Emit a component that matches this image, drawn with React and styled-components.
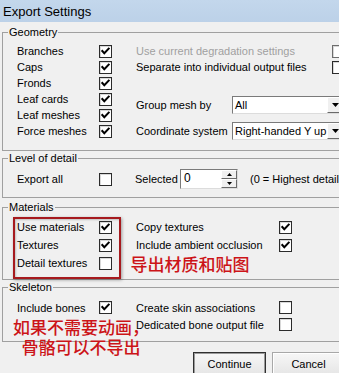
import React from 'react';
import styled, { createGlobalStyle } from 'styled-components';

const Global = createGlobalStyle`
  html, body { margin: 0; padding: 0; background: #f0f0f0; overflow: hidden; }
  body { font-family: "Liberation Sans", Arial, sans-serif; font-size: 11px; color: #000; }
  * { box-sizing: border-box; }
`;

const Window = styled.div`
  position: relative;
  width: 358px;
  height: 373px;
  overflow: hidden;
  background: #f0f0f0;
  display: flex;
  flex-direction: column;
`;

const TitleBar = styled.div`
  height: 22px;
  flex-shrink: 0;
  display: flex;
  align-items: center;
  padding-left: 3px;
  background: linear-gradient(#c3d7ec, #bcd1e8);
  font-size: 13px;
  color: #000;
`;

const Body = styled.div`
  display: flex;
  flex-direction: column;
  padding: 0 3px 0 2px;
`;

const Group = styled.fieldset`
  margin: ${p => p.$mt}px 0 0 0;
  padding: 0;
  min-width: 0;
  border: 1px solid #a0a0a0;
`;

const Legend = styled.legend`
  margin-left: 5px;
  padding: 0 1px;
  line-height: 12px;
  font-size: 11px;
`;

const Content = styled.div`
  display: flex;
  padding: ${p => p.$pt}px 0 ${p => p.$pb}px 14px;
`;

const Column = styled.div`
  display: flex;
  flex-direction: column;
  margin-left: ${p => p.$ml || 0}px;
`;

const Row = styled.div`
  display: flex;
  align-items: center;
  height: ${p => p.$h}px;
  margin-top: ${p => p.$mt || 0}px;
`;

const Label = styled.span`
  width: ${p => p.$w}px;
  flex-shrink: 0;
  white-space: nowrap;
  color: ${p => (p.$disabled ? '#a0a0a0' : '#000')};
  margin-left: ${p => p.$ml || 0}px;
`;

const Box = styled.span`
  width: 13px;
  height: 13px;
  flex-shrink: 0;
  display: inline-flex;
  align-items: center;
  justify-content: center;
  background: #fff;
  border: 1px solid ${p => (p.$disabled ? '#6d6d6d' : '#2b2b2b')};
  box-shadow: inset 1px 1px 0 #d8d8d8;
`;

const Check = ({ checked, disabled }) => (
  <Box $disabled={disabled}>
    {checked && (
      <svg width="11" height="11" viewBox="0 0 11 11">
        <polyline points="2.3,5 4.3,7.2 8.7,2.6" fill="none" stroke="#000" strokeWidth="2" strokeLinecap="square" />
      </svg>
    )}
  </Box>
);

const Select = styled.div`
  width: 112px;
  height: 18px;
  flex-shrink: 0;
  display: flex;
  align-items: stretch;
  background: #fff;
  border: 1px solid #7a7a7a;
  border-right-color: #dcdcdc;
  border-bottom-color: #dcdcdc;
`;

const SelectText = styled.span`
  flex: 1;
  min-width: 0;
  display: flex;
  align-items: center;
  padding-left: 2px;
  white-space: nowrap;
  overflow: hidden;
  font-size: 11px;
`;

const ArrowButton = styled.span`
  width: 16px;
  flex-shrink: 0;
  display: flex;
  align-items: center;
  justify-content: center;
  background: #f0f0f0;
  border: 1px solid;
  border-color: #fff #6a6a6a #6a6a6a #fff;
`;

const Dropdown = ({ value }) => (
  <Select>
    <SelectText>{value}</SelectText>
    <ArrowButton>
      <svg width="7" height="4" viewBox="0 0 7 4">
        <polygon points="0,0 7,0 3.5,4" fill="#000" />
      </svg>
    </ArrowButton>
  </Select>
);

const SpinBox = styled.div`
  width: 58px;
  height: 20px;
  flex-shrink: 0;
  display: flex;
  background: #fff;
  border: 1px solid #7a7a7a;
  border-right-color: #dcdcdc;
  border-bottom-color: #dcdcdc;
`;

const SpinText = styled.span`
  flex: 1;
  padding: 1px 0 0 3px;
  font-size: 12px;
  line-height: 14px;
`;

const SpinButtons = styled.div`
  width: 16px;
  display: flex;
  flex-direction: column;
`;

const SpinButton = styled.span`
  flex: 1;
  display: flex;
  align-items: center;
  justify-content: center;
  background: #f0f0f0;
  border: 1px solid;
  border-color: #fff #6a6a6a #6a6a6a #fff;
`;

const Tri = ({ up }) => (
  <svg width="5" height="3" viewBox="0 0 5 3">
    <polygon points={up ? '2.5,0 5,3 0,3' : '0,0 5,0 2.5,3'} fill="#000" />
  </svg>
);

const Buttons = styled.div`
  display: flex;
  justify-content: flex-end;
  gap: 6px;
  margin-top: 10px;
  padding-right: 10px;
`;

const Button = styled.div`
  width: 73px;
  height: 23px;
  display: flex;
  align-items: center;
  justify-content: center;
  background: linear-gradient(#f7f7f7, #e6e6e6);
  border: 1px solid ${p => (p.$default ? '#303030' : '#a8a8a8')};
  box-shadow: ${p => (p.$default ? 'inset 0 0 0 1px #9a9a9a' : 'inset 1px 1px 0 #fff')};
  font-size: 11px;
`;

const Highlight = styled.div`
  position: absolute;
  left: 13px;
  top: 217px;
  width: 108px;
  height: 62px;
  border: 2px solid #a61a1e;
  box-shadow: 1px 1px 3px rgba(0, 0, 0, 0.35), inset 1px 1px 2px rgba(0, 0, 0, 0.2);
  pointer-events: none;
`;

const Note = styled.div`
  position: absolute;
  left: ${p => p.$x}px;
  top: ${p => p.$y}px;
  width: ${p => p.$w}px;
  text-align: center;
  font-family: "Noto Sans CJK SC", "Noto Sans", sans-serif;
  font-size: 17px;
  line-height: 20px;
  font-weight: 500;
  color: #cc1418;
  white-space: nowrap;
`;

const geometryLeft = ['Branches', 'Caps', 'Fronds', 'Leaf cards', 'Leaf meshes', 'Force meshes'];

export default function App() {
  return (
    <Window>
      <Global />
      <TitleBar>Export Settings</TitleBar>
      <Body>
        <Group $mt={4}>
          <Legend>Geometry</Legend>
          <Content $pt={5} $pb={10}>
            <Column>
              {geometryLeft.map(l => (
                <Row key={l} $h={16}>
                  <Label $w={82}>{l}</Label>
                  <Check checked />
                </Row>
              ))}
            </Column>
            <Column $ml={24}>
              <Row $h={16}>
                <Label $w={196} $disabled>Use current degradation settings</Label>
                <Check disabled />
              </Row>
              <Row $h={16}>
                <Label $w={196}>Separate into individual output files</Label>
                <Check />
              </Row>
              <Row $h={18} $mt={21}>
                <Label $w={96}>Group mesh by</Label>
                <Dropdown value="All" />
              </Row>
              <Row $h={18} $mt={8}>
                <Label $w={96}>Coordinate system</Label>
                <Dropdown value="Right-handed Y up" />
              </Row>
            </Column>
          </Content>
        </Group>

        <Group $mt={1}>
          <Legend>Level of detail</Legend>
          <Content $pt={5} $pb={8}>
            <Row $h={20}>
              <Label $w={82}>Export all</Label>
              <Check />
              <Label $w={45} $ml={23}>Selected</Label>
              <SpinBox>
                <SpinText>0</SpinText>
                <SpinButtons>
                  <SpinButton><Tri up /></SpinButton>
                  <SpinButton><Tri /></SpinButton>
                </SpinButtons>
              </SpinBox>
              <Label $w={120} $ml={12}>(0 = Highest detail)</Label>
            </Row>
          </Content>
        </Group>

        <Group $mt={3}>
          <Legend>Materials</Legend>
          <Content $pt={5} $pb={7}>
            <Column>
              <Row $h={18}><Label $w={82}>Use materials</Label><Check checked /></Row>
              <Row $h={18}><Label $w={82}>Textures</Label><Check checked /></Row>
              <Row $h={18}><Label $w={82}>Detail textures</Label><Check /></Row>
            </Column>
            <Column $ml={24}>
              <Row $h={18}><Label $w={143}>Copy textures</Label><Check checked /></Row>
              <Row $h={18}><Label $w={143}>Include ambient occlusion</Label><Check checked /></Row>
            </Column>
          </Content>
        </Group>

        <Group $mt={1}>
          <Legend>Skeleton</Legend>
          <Content $pt={6} $pb={8}>
            <Column>
              <Row $h={17}><Label $w={82}>Include bones</Label><Check checked /></Row>
            </Column>
            <Column $ml={24}>
              <Row $h={17}><Label $w={143}>Create skin associations</Label><Check /></Row>
              <Row $h={17}><Label $w={143}>Dedicated bone output file</Label><Check /></Row>
            </Column>
          </Content>
        </Group>

        <Buttons>
          <Button $default>Continue</Button>
          <Button>Cancel</Button>
        </Buttons>
      </Body>

      <Highlight />
      <Note $x={130} $y={254} $w={120}>导出材质和贴图</Note>
      <Note $x={13} $y={317} $w={136}>如果不需要动画，<br />骨骼可以不导出</Note>
    </Window>
  );
}
